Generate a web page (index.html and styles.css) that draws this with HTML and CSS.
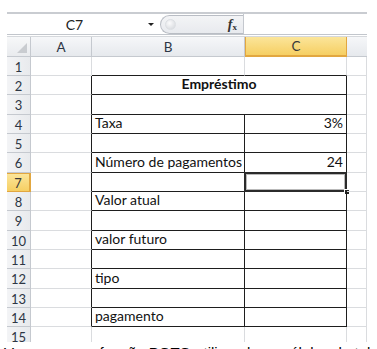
FILE: index.html
```html
<!DOCTYPE html>
<html lang="pt">

<head>
    <meta charset="UTF-8" />
    <title>Empréstimo</title>
    <link rel="stylesheet" href="styles.css">
</head>

<body>
    <div class="window">
        <div class="formula-bar">
            <div class="name-box">
                <span class="cell-ref">C7</span>
                <span class="drop-arrow"></span>
            </div>
            <div class="fx-zone">
                <span class="knob"></span>
                <span class="fx"><i>f</i><sub>x</sub></span>
            </div>
            <div class="formula-input"></div>
        </div>

        <div class="sheet">
            <!-- column headers -->
            <div class="corner"><span class="tri"></span></div>
            <div class="col-head">A</div>
            <div class="col-head">B</div>
            <div class="col-head active">C</div>
            <div class="col-head last"></div>

            <!-- 1 -->
            <div class="row-head">1</div>
            <div class="c"></div>
            <div class="c bb"></div>
            <div class="c bb"></div>
            <div class="c"></div>

            <!-- 2 -->
            <div class="row-head">2</div>
            <div class="c br"></div>
            <div class="c span2 box title">Empréstimo</div>
            <div class="c"></div>

            <!-- 3 -->
            <div class="row-head">3</div>
            <div class="c br"></div>
            <div class="c span2 box"></div>
            <div class="c"></div>

            <!-- 4 -->
            <div class="row-head">4</div>
            <div class="c br"></div>
            <div class="c box">Taxa</div>
            <div class="c box num">3%</div>
            <div class="c"></div>

            <!-- 5 -->
            <div class="row-head">5</div>
            <div class="c br"></div>
            <div class="c box"></div>
            <div class="c box"></div>
            <div class="c"></div>

            <!-- 6 -->
            <div class="row-head">6</div>
            <div class="c br"></div>
            <div class="c box">Número de pagamentos</div>
            <div class="c box num">24</div>
            <div class="c"></div>

            <!-- 7 -->
            <div class="row-head active">7</div>
            <div class="c br"></div>
            <div class="c box"></div>
            <div class="c box selected"><span class="sel-frame"></span><span class="handle"></span></div>
            <div class="c"></div>

            <!-- 8 -->
            <div class="row-head">8</div>
            <div class="c br"></div>
            <div class="c box">Valor atual</div>
            <div class="c box"></div>
            <div class="c"></div>

            <!-- 9 -->
            <div class="row-head">9</div>
            <div class="c br"></div>
            <div class="c box"></div>
            <div class="c box"></div>
            <div class="c"></div>

            <!-- 10 -->
            <div class="row-head">10</div>
            <div class="c br"></div>
            <div class="c box">valor futuro</div>
            <div class="c box"></div>
            <div class="c"></div>

            <!-- 11 -->
            <div class="row-head">11</div>
            <div class="c br"></div>
            <div class="c box"></div>
            <div class="c box"></div>
            <div class="c"></div>

            <!-- 12 -->
            <div class="row-head">12</div>
            <div class="c br"></div>
            <div class="c box">tipo</div>
            <div class="c box"></div>
            <div class="c"></div>

            <!-- 13 -->
            <div class="row-head">13</div>
            <div class="c br"></div>
            <div class="c box"></div>
            <div class="c box"></div>
            <div class="c"></div>

            <!-- 14 -->
            <div class="row-head">14</div>
            <div class="c br"></div>
            <div class="c box">pagamento</div>
            <div class="c box"></div>
            <div class="c"></div>

            <!-- 15 -->
            <div class="row-head top">15</div>
            <div class="c"></div>
            <div class="c"></div>
            <div class="c"></div>
            <div class="c"></div>
        </div>
    </div>

    <p class="caption">Vamos usar a função PGTO utilizando as células da tabela</p>
</body>

</html>
```

FILE: styles.css
```css
* {
    box-sizing: border-box;
}

body {
    margin: 0;
    background: #fff;
    font-family: Lato, 'Liberation Sans', sans-serif;
    overflow: hidden;
}

.window {
    width: 360px;
    margin: 12px 0 0 7px;
    border-top: 2px solid #c9ccd1;
}

/* formula bar */
.formula-bar {
    display: flex;
    height: 21px;
    border-bottom: 1px solid #c2c6cc;
}

.name-box {
    width: 151px;
    display: flex;
    align-items: center;
    background: #fff;
}

.cell-ref {
    flex: 1;
    text-align: center;
    font-size: 14px;
    color: #222;
    margin-right: 6px;
}

.drop-arrow {
    width: 0;
    height: 0;
    border-left: 3px solid transparent;
    border-right: 3px solid transparent;
    border-top: 3px solid #222;
    margin-right: 4px;
    margin-top: 1px;
}

.fx-zone {
    width: 83px;
    margin: 1px 0 0 2px;
    height: 19px;
    border: 1px solid #b9bdc4;
    border-right: none;
    border-radius: 10px 0 0 10px;
    background: linear-gradient(#f3f4f6, #e8eaee);
    display: flex;
    align-items: center;
    justify-content: space-between;
    padding-left: 4px;
    padding-right: 6px;
}

.knob {
    width: 11px;
    height: 11px;
    border-radius: 50%;
    background: radial-gradient(circle at 40% 35%, #fbfbfc, #d2d5da);
    border: 1px solid #dcdfe3;
}

.fx {
    font-family: 'Liberation Serif', serif;
    font-weight: bold;
    font-size: 14px;
    color: #333;
    line-height: 1;
}

.fx sub {
    font-size: 9px;
    vertical-align: -1px;
}

.formula-input {
    flex: 1;
    background: #fff;
    border-left: 1px solid #c4c8ce;
}

/* sheet grid */
.sheet {
    margin-top: 1px;
    display: grid;
    grid-template-columns: 24px 61px 153px 102px 20px;
    grid-template-rows: 20px repeat(5, 19px 19px 20px);
    height: 306px;
    overflow: hidden;
    border-top: 1px solid #d5d8dc;
    font-size: 14px;
    color: #111;
}

.corner {
    background: linear-gradient(#f7f8f9, #e9ebee);
    border-right: 1px solid #c5c9cf;
    border-bottom: 1px solid #c5c9cf;
    position: relative;
}

.tri {
    position: absolute;
    right: 3px;
    bottom: 3px;
    width: 0;
    height: 0;
    border-left: 10px solid transparent;
    border-bottom: 10px solid #c9ccd0;
}

.col-head,
.row-head {
    background: linear-gradient(#f6f7f9, #e6e9ed);
    border-right: 1px solid #c5c9cf;
    border-bottom: 1px solid #c5c9cf;
    color: #2d3644;
    font-size: 13.5px;
    display: flex;
    align-items: center;
    justify-content: center;
}

.col-head.last {
    border-right: none;
}

.row-head {
    background: linear-gradient(90deg, #f3f4f6, #e8eaed);
    font-size: 13px;
    padding-top: 1px;
}

.row-head.top {
    align-items: flex-start;
    padding-top: 2px;
}

.col-head.active,
.row-head.active {
    background: linear-gradient(#fbe59a, #f6cf63);
    border-color: #e2a740;
    color: #3a3a3a;
}

.col-head.active {
    border-left: 1px solid #e2a740;
    border-bottom: 2px solid #e2a740;
}

.row-head.active {
    border-right: 2px solid #e2a740;
    border-top: 1px solid #e2a740;
}

.c {
    border-right: 1px solid #dadcdf;
    border-bottom: 1px solid #dadcdf;
    display: flex;
    align-items: flex-end;
    padding: 0 3px 2px;
    white-space: nowrap;
    position: relative;
}

.c.bb {
    border-bottom-color: #1e1e1e;
}

.c.br {
    border-right-color: #1e1e1e;
}

.c.box {
    border-right-color: #1e1e1e;
    border-bottom-color: #1e1e1e;
}

.span2 {
    grid-column: span 2;
}

.title {
    justify-content: center;
    font-weight: bold;
}

.num {
    justify-content: flex-end;
}

.selected .sel-frame {
    position: absolute;
    left: -1px;
    top: -1px;
    right: -1px;
    bottom: -1px;
    border: 2px solid #2b2b2b;
    box-shadow: inset 0 0 0 1px #b9b9b9;
}

.selected .handle {
    position: absolute;
    right: -4px;
    bottom: -4px;
    width: 6px;
    height: 6px;
    background: #222;
    border: 1px solid #fff;
}

.caption {
    margin: 2px 0 0;
    width: 377px;
    overflow: hidden;
    padding-left: 4px;
    font-family: 'Liberation Sans', sans-serif;
    font-size: 15px;
    line-height: 18px;
    color: #000;
    white-space: nowrap;
}
```
